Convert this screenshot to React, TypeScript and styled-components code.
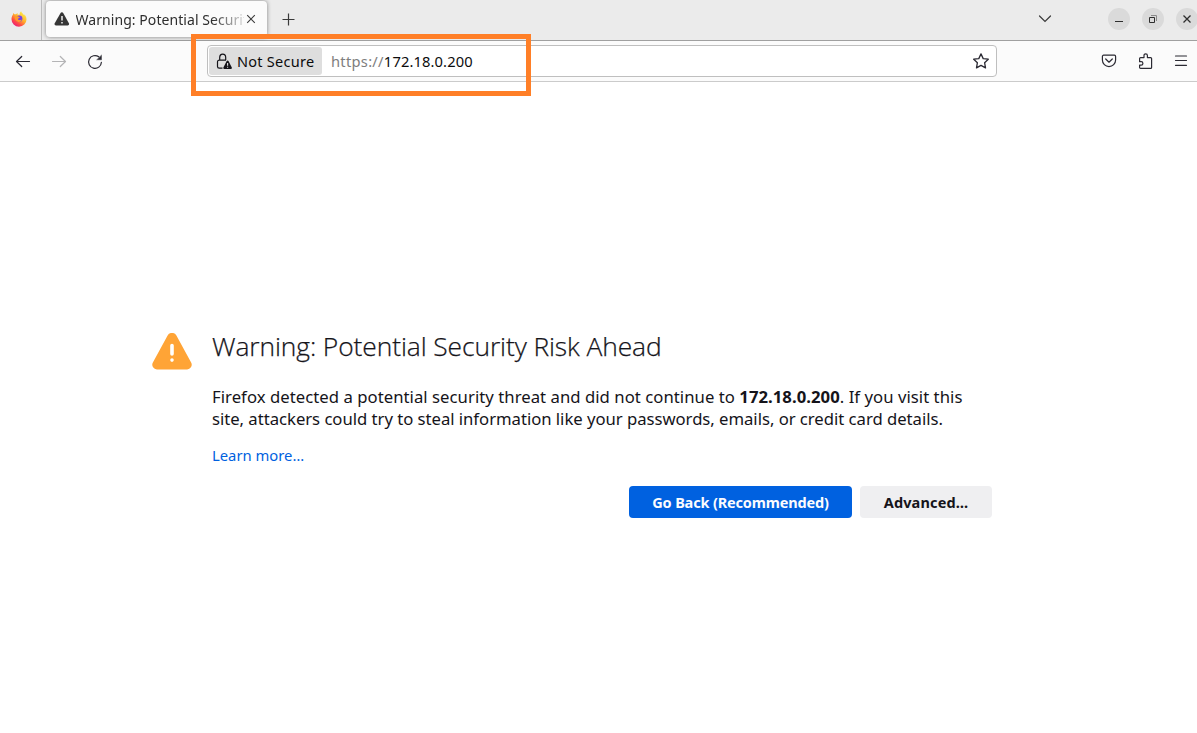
import React from "react";
import styled, { createGlobalStyle } from "styled-components";

const Global = createGlobalStyle`
  * { box-sizing: border-box; }
  body { margin: 0; background: #fff; font-family: "Noto Sans", "Open Sans", sans-serif; color: #15141a; overflow: hidden; }
  button { font: inherit; border: 0; padding: 0; background: none; color: inherit; }
  h1, p { margin: 0; }
  svg { display: block; flex: none; }
`;

const Window = styled.div`
  position: relative;
  width: 1197px;
  height: 733px;
  display: flex;
  flex-direction: column;
  overflow: hidden;
`;

const TabStrip = styled.header`
  flex: none;
  height: 41px;
  display: flex;
  background: #ebebeb;
  border-bottom: 1px solid #a0a0a0;
`;

const PinnedArea = styled.div`
  width: 42px;
  height: 40px;
  padding: 11px 0 0 11px;
  border-right: 1px solid #bcbcbc;
`;

const Tab = styled.div`
  width: 221px;
  height: 36px;
  margin: 1px 0 0 4px;
  padding: 0 11px 0 8px;
  display: flex;
  align-items: center;
  background: #fbfbfb;
  border-radius: 4px;
  box-shadow: 0 0 4px rgba(0, 0, 0, 0.45);
`;

const TabTitle = styled.span`
  flex: none;
  width: 168px;
  margin: 1px 2px 0 6px;
  overflow: hidden;
  white-space: nowrap;
  font-size: 14px;
  line-height: 20px;
  letter-spacing: 0.06px;
  text-indent: -0.5px;
  color: #2e2e2e;
  mask-image: linear-gradient(to right, #000 136px, transparent 174px);
`;

const NewTab = styled.button`
  width: 13px;
  height: 13px;
  margin: 13px 0 0 15px;
`;

const WindowControls = styled.div`
  margin-left: auto;
  display: flex;
  padding: 8px 0 0;
`;

const ListTabs = styled.button`
  width: 14px;
  height: 22px;
  margin-right: 56px;
  display: grid;
  place-items: center;
`;

const WindowButton = styled.button<{ $gap: number }>`
  flex: none;
  width: 22px;
  height: 22px;
  margin-right: ${(p) => p.$gap}px;
  border-radius: 50%;
  background: #dadada;
`;

const Toolbar = styled.nav`
  flex: none;
  height: 41px;
  display: flex;
  align-items: center;
  background: #fbfbfb;
  border-bottom: 1px solid #cbcbcb;
`;

const NavButtons = styled.div`
  width: 207px;
  padding: 1px 0 0 15px;
  display: flex;
  gap: 20px;
`;

const AddressBar = styled.div`
  width: 790px;
  height: 32px;
  padding: 0 7px 0 1px;
  display: flex;
  align-items: center;
  background: #fff;
  border: 1px solid #bfbfbf;
  border-radius: 4px;
`;

const Identity = styled.div`
  width: 113px;
  height: 28px;
  padding-left: 7px;
  display: flex;
  align-items: center;
  gap: 4px;
  border-radius: 3px;
  background: #dedede;
  font-size: 14.5px;
  letter-spacing: 0.26px;
  color: #0c0c0d;
  white-space: nowrap;
`;

const Url = styled.div`
  flex: 1;
  margin-left: 9px;
  font-size: 14.7px;
  letter-spacing: 0.12px;
  color: #0c0c0d;
  white-space: nowrap;
`;

const Scheme = styled.span`
  letter-spacing: 0.28px;
  color: #7e7e7e;
`;

const Actions = styled.div`
  margin-left: auto;
  padding-right: 8px;
  display: flex;
  gap: 20px;
`;

const Highlight = styled.div`
  position: absolute;
  left: 191px;
  top: 34px;
  width: 340px;
  height: 62px;
  border: 5px solid #ff7f27;
`;

const Page = styled.main`
  display: flex;
  padding: 248px 205px 0 152px;
  gap: 20px;
`;

const WarningMark = styled.div`
  padding-top: 3px;
`;

const Message = styled.section`
  width: 780px;
`;

const Heading = styled.h1`
  height: 34px;
  font-family: "Open Sans", sans-serif;
  font-weight: 300;
  font-size: 26.4px;
  line-height: 32px;
  letter-spacing: -0.1px;
  -webkit-text-stroke: 0.25px #15141a;
  white-space: nowrap;
`;

const Body = styled.p`
  margin-top: 22px;
  font-size: 16.7px;
  line-height: 22px;
  white-space: nowrap;
`;

const Line = styled.span<{ $tracking: number }>`
  display: block;
  letter-spacing: ${(p) => p.$tracking}px;
`;

const Learn = styled.a`
  display: block;
  margin-top: 14px;
  font-size: 14.8px;
  line-height: 22px;
  color: #0061e0;
`;

const ButtonRow = styled.div`
  margin-top: 20px;
  display: flex;
  justify-content: flex-end;
  gap: 8px;
`;

const Action = styled.button<{ $primary?: boolean }>`
  && {
    width: ${(p) => (p.$primary ? 223 : 132)}px;
    height: 32px;
    border-radius: 4px;
    background: ${(p) => (p.$primary ? "#0061e0" : "#efeff1")};
    color: ${(p) => (p.$primary ? "#fbfbfe" : "#15141a")};
    font-size: 14.5px;
    letter-spacing: ${(p) => (p.$primary ? -0.16 : 0.14)}px;
    font-weight: 700;
    white-space: nowrap;
  }
`;

const FirefoxLogo = () => (
  <svg width="16" height="16" viewBox="0 0 16 16">
    <defs>
      <linearGradient id="flame" x1="0.85" y1="0.05" x2="0.2" y2="0.95">
        <stop offset="0" stopColor="#fff44f" />
        <stop offset="0.45" stopColor="#ffb02c" />
        <stop offset="0.75" stopColor="#ff4a45" />
        <stop offset="1" stopColor="#e81c7c" />
      </linearGradient>
    </defs>
    <path fill="url(#flame)" d="M10.2 0.3c.3 1.3 1.3 2 2.3 3.1.5.5.8 1 .9 1.4 0-.6-.1-1.1-.2-1.5 1.3 1 2.3 3 2.3 5.1A7.5 7.3 0 0 1 8 15.7 7.5 7.3 0 0 1 .5 8.3c0-1.9.6-3.5 1.5-4.8l.4-1.5c.4.3.7.8.9 1.3.6-.2 1.2-.2 1.7 0 .5-.6 1.2-1 2-1.1-.5.5-.7 1-.6 1.4l2.2.2C8.6 2.500 9 1.200 10.200.3z" />
    <circle cx="8.3" cy="7.7" r="3.1" fill="#7542e5" />
    <path fill="#ff9a2b" d="M3.6 5.6c1.5-.8 3-.6 4.1.2L8.8 6c-.1.9-.9 1.2-1.6 1.5-.4.6-.1 1.5 1 1.6 1.1.1 1.7-.6 2.5-.3-.4 1.7-2 2.5-3.5 2.1C4.8 10.4 3.3 8 3.6 5.6z" />
  </svg>
);

const AlertGlyph = () => (
  <svg width="16" height="16" viewBox="0 0 16 16">
    <path fill="#363636" d="M6.6 1.9a1.5 1.5 0 0 1 2.6 0l5.7 10.400a1.500 1.500 0 0 1-1.300 2.200H2a1.500 1.500 0 0 1-1.300-2.200z" />
    <path stroke="#fff" strokeWidth="1.4" d="M8 5v4.6M8 11v1.6" />
  </svg>
);

const LockWarning = () => (
  <svg width="17" height="17" viewBox="0 0 17 17" fill="none" stroke="#15141a" strokeWidth="1.2">
    <path d="M3.700 7V4.400a3 3.300 0 0 1 6 0V7M6.500 15.200H3.200A1.700 1.700 0 0 1 1.500 13.500V8.900A1.700 1.700 0 0 1 3.200 7.200H10" />
    <path fill="#15141a" stroke="none" d="M10.700 8a1 1 0 0 1 1.800 0l3.300 6.400a1 1 0 0 1-.9 1.500H8.300a1 1 0 0 1-.9-1.500z" />
    <path stroke="#dedede" strokeWidth="1.1" d="M11.600 10.100v2.700M11.600 13.700v1" />
  </svg>
);

const icon = {
  width: 16,
  height: 16,
  viewBox: "0 0 16 16",
  fill: "none",
  stroke: "#2b2a33",
  strokeWidth: 1.2,
  strokeLinecap: "round",
  strokeLinejoin: "round",
} as const;

export default function App() {
  return (
    <Window>
      <Global />
      <TabStrip>
        <PinnedArea>
          <FirefoxLogo />
        </PinnedArea>
        <Tab>
          <AlertGlyph />
          <TabTitle>Warning: Potential Security Risk Ahead</TabTitle>
          <svg width="10" height="10" viewBox="0 0 10 10" stroke="#3c3c3c" strokeWidth="1.1">
            <path d="M1.200 1.200l7.600 7.600M8.800 1.200L1.200 8.800" />
          </svg>
        </Tab>
        <NewTab>
          <svg width="13" height="13" viewBox="0 0 13 13" stroke="#3a3a3a" strokeWidth="1.2">
            <path d="M6.500.5v12M.5 6.500h12" />
          </svg>
        </NewTab>
        <WindowControls>
          <ListTabs>
            <svg width="14" height="8" viewBox="0 0 14 8" fill="none" stroke="#3a3a3a" strokeWidth="1.2" strokeLinecap="round">
              <path d="M1.500 1L7 6.500 12.500 1" />
            </svg>
          </ListTabs>
          <WindowButton $gap={12}>
            <svg width="22" height="22" stroke="#2e2e2e">
              <path d="M7 13.500h8" />
            </svg>
          </WindowButton>
          <WindowButton $gap={12}>
            <svg width="22" height="22" fill="none" stroke="#2e2e2e">
              <path d="M7.500 9.500h5v5h-5z" />
              <path d="M9 7.500h5.500V13" stroke="#8a8a8a" />
            </svg>
          </WindowButton>
          <WindowButton $gap={-1}>
            <svg width="22" height="22" stroke="#2e2e2e" strokeWidth="1.3">
              <path d="M7.500 7.500l7 7M14.500 7.500l-7 7" />
            </svg>
          </WindowButton>
        </WindowControls>
      </TabStrip>
      <Toolbar>
        <NavButtons>
          <svg {...icon}>
            <path d="M14.500 7.500H1.500M6.700 2.500L1.500 7.500l5.200 5" />
          </svg>
          <svg {...icon} stroke="#b4b4b6">
            <path d="M1.500 7.500h13M9.300 2.500l5.200 5-5.200 5" />
          </svg>
          <svg {...icon}>
            <path d="M14.400 8.300A6.400 6.400 0 1 1 11.800 2.800" />
            <path d="M14.500 1.300v4.500H10z" fill="#2b2a33" strokeWidth="0.4" />
          </svg>
        </NavButtons>
        <AddressBar>
          <Identity>
            <LockWarning />
            Not Secure
          </Identity>
          <Url>
            <Scheme>https://</Scheme>172.18.0.200
          </Url>
          <svg {...icon} strokeWidth="1.3">
            <path d="M8 .9l2.200 4.700 5.100.6-3.700 3.500.9 5.200L8 12.400l-4.500 2.500.9-5.200L.7 6.200l5.100-.6z" />
          </svg>
        </AddressBar>
        <Actions>
          <svg {...icon}>
            <path d="M2.600 2.200h10.800a1.200 1.200 0 0 1 1.200 1.200V7A6.600 6.600 0 0 1 1.400 7V3.400a1.200 1.200 0 0 1 1.200-1.200zM4.700 6L8 9.200 11.300 6" />
          </svg>
          <svg {...icon}>
            <path d="M7 4.600V2.500a1.700 1.700 0 0 1 3.400 0V4.600h3.200a1 1 0 0 1 1 1v8.800a1 1 0 0 1-1 1H3.600a1 1 0 0 1-1-1v-2.300h1.600a1.700 1.700 0 0 0 0-3.400H2.600V5.600a1 1 0 0 1 1-1z" />
          </svg>
          <svg {...icon}>
            <path d="M2.500 3h11M2.500 7.500h11M2.500 12.300h11" />
          </svg>
        </Actions>
      </Toolbar>
      <Page>
        <WarningMark>
          <svg width="40" height="37" viewBox="0 0 40 37">
            <path fill="#ffa436" d="M15.600 2.500a5 5 0 0 1 8.800 0l15 27.500a4.800 4.800 0 0 1-4.300 6.500H4.900A4.800 4.800 0 0 1 .6 30z" />
            <path stroke="#fff" strokeWidth="3.6" strokeLinecap="round" d="M20 12.500v8.500M20 27v.1" />
          </svg>
        </WarningMark>
        <Message>
          <Heading>Warning: Potential Security Risk Ahead</Heading>
          <Body>
            <Line $tracking={0.04}>
              Firefox detected a potential security threat and did not continue to <b>172.18.0.200</b>. If you visit this
            </Line>
            <Line $tracking={-0.03}>
              site, attackers could try to steal information like your passwords, emails, or credit card details.
            </Line>
          </Body>
          <Learn>Learn more…</Learn>
          <ButtonRow>
            <Action $primary>Go Back (Recommended)</Action>
            <Action>Advanced…</Action>
          </ButtonRow>
        </Message>
      </Page>
      <Highlight />
    </Window>
  );
}
